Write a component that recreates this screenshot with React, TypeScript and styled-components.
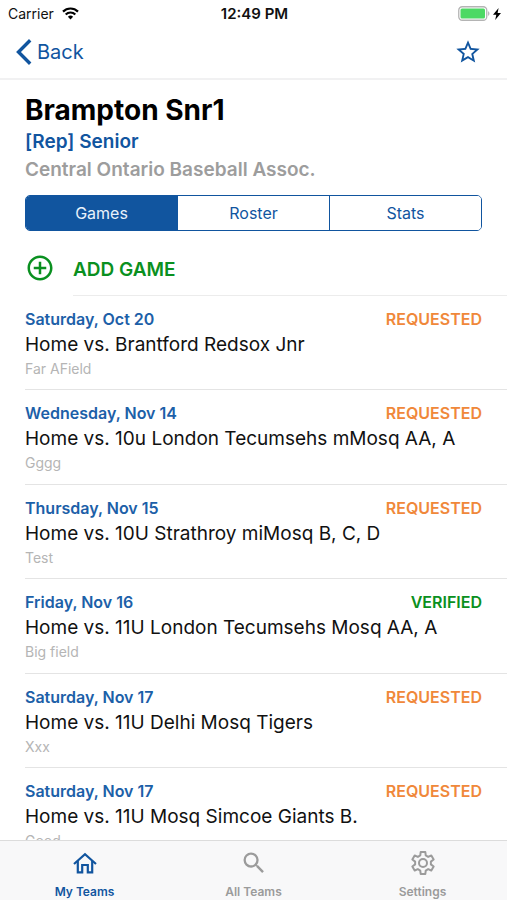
import React, { useState } from "react";
import styled, { createGlobalStyle } from "styled-components";
import { MdAddCircleOutline, MdSearch, MdStarBorder } from "react-icons/md";

const blue = "#11559f";
const green = "#0a9020";
const orange = "#f0883a";
const grey = "#9b9b9b";

const GlobalStyle = createGlobalStyle`
  *, *::before, *::after { box-sizing: border-box; }
  body { margin: 0; background: #fff; font-family: Inter, "Liberation Sans", sans-serif; color: #111; }
  h1, h2, p, ul { margin: 0; padding: 0; }
  ul { list-style: none; }
  button { font: inherit; background: none; border: 0; padding: 0; cursor: pointer; }
`;

const Screen = styled.div`
  display: flex;
  flex-direction: column;
  height: 100vh;
  overflow: hidden;
`;

const StatusBar = styled.div`
  display: grid;
  grid-template-columns: 1fr auto 1fr;
  align-items: center;
  flex: none;
  height: 27px;
  padding: 0 6px 0 8px;
  font-size: 14px;
  line-height: 20px;
`;

const Carrier = styled.span`
  display: flex;
  align-items: center;
  gap: 8px;
`;

const Clock = styled.time`
  font-size: 15px;
  font-weight: 600;
`;

const Power = styled.span`
  display: flex;
  align-items: center;
  justify-content: flex-end;
  gap: 3px;
`;

const NavBar = styled.nav`
  display: flex;
  align-items: center;
  justify-content: space-between;
  flex: none;
  height: 53px;
  padding: 0 25px 2px 16px;
  border-bottom: 2px solid #f1f1f2;
  color: ${blue};
`;

const BackLink = styled.a`
  display: flex;
  align-items: center;
  gap: 5px;
  color: ${blue};
  font-size: 20px;
  line-height: 28px;
  text-decoration: none;
`;

const IconButton = styled.button`
  display: flex;
  color: ${blue};
`;

const Content = styled.main`
  flex: 1;
  min-height: 0;
  overflow: hidden;
`;

const TeamHeader = styled.header`
  padding: 12px 25px 0;
`;

const TeamName = styled.h1`
  color: #000;
  font-size: 28px;
  line-height: 36px;
  font-weight: 700;
`;

const Division = styled.h2`
  color: ${blue};
  font-size: 19px;
  line-height: 28px;
  font-weight: 600;
`;

const Association = styled.p`
  color: #9d9d9d;
  font-size: 19px;
  line-height: 28px;
  font-weight: 600;
`;

const Segments = styled.div`
  display: flex;
  margin-top: 11px;
  height: 36px;
  border: 1px solid ${blue};
  border-radius: 5px;
  overflow: hidden;
`;

const Segment = styled.button<{ $active: boolean }>`
  flex: 1;
  font-size: 16px;
  line-height: 20px;
  color: ${(p) => (p.$active ? "#e8f1fb" : blue)};
  background: ${(p) => (p.$active ? blue : "#fff")};
  & + & { border-left: 1px solid ${blue}; }
`;

const AddGame = styled.button`
  display: flex;
  align-items: center;
  gap: 18px;
  width: 100%;
  height: 65px;
  padding: 9px 0 0 25px;
  color: ${green};
  svg { flex: none; }
`;

const AddLabel = styled.span`
  display: flex;
  align-items: center;
  flex: 1;
  height: 100%;
  padding-top: 4px;
  border-bottom: 1px solid #ececec;
  font-size: 19px;
  font-weight: 600;
`;

const GameRow = styled.li`
  height: 94px;
  margin-left: 25px;
  padding: 12px 25px 0 0;
  border-bottom: 1px solid #e4e4e4;
  &:nth-child(even) { height: 95px; }
`;

const GameTop = styled.div`
  display: flex;
  justify-content: space-between;
  font-size: 16px;
  line-height: 23px;
  font-weight: 600;
`;

const GameDate = styled.time`
  color: #1c60a8;
`;

const Status = styled.span<{ $verified: boolean }>`
  color: ${(p) => (p.$verified ? green : orange)};
`;

const Matchup = styled.p`
  font-size: 19px;
  line-height: 28px;
`;

const Field = styled.p`
  color: #b5b5b5;
  font-size: 14px;
  line-height: 20px;
`;

const TabBar = styled.nav`
  display: grid;
  grid-template-columns: repeat(3, 1fr);
  flex: none;
  height: 60px;
  border-top: 1px solid #dcdcdc;
  background: #f8f8f9;
`;

const Tab = styled.a<{ $active: boolean }>`
  display: flex;
  flex-direction: column;
  align-items: center;
  gap: 7px;
  padding-top: 8px;
  color: ${(p) => (p.$active ? blue : grey)};
  font-size: 12px;
  line-height: 16px;
  font-weight: 600;
  text-decoration: none;
`;

const games = [
  { date: "Saturday, Oct 20", status: "REQUESTED", title: "Home vs. Brantford Redsox Jnr", field: "Far AField" },
  { date: "Wednesday, Nov 14", status: "REQUESTED", title: "Home vs. 10u London Tecumsehs mMosq AA, A", field: "Gggg" },
  { date: "Thursday, Nov 15", status: "REQUESTED", title: "Home vs. 10U Strathroy miMosq B, C, D", field: "Test" },
  { date: "Friday, Nov 16", status: "VERIFIED", title: "Home vs. 11U London Tecumsehs Mosq AA, A", field: "Big field" },
  { date: "Saturday, Nov 17", status: "REQUESTED", title: "Home vs. 11U Delhi Mosq Tigers", field: "Xxx" },
  { date: "Saturday, Nov 17", status: "REQUESTED", title: "Home vs. 11U Mosq Simcoe Giants B.", field: "Good" },
];

const segments = ["Games", "Roster", "Stats"];

const gearPoints = Array.from({ length: 6 }, (_, i) => {
  const at = (radius: number, degrees: number) => {
    const a = ((i * 60 - 90 + degrees) * Math.PI) / 180;
    return `${(14 + radius * Math.cos(a)).toFixed(2)},${(14 + radius * Math.sin(a)).toFixed(2)}`;
  };
  return [at(8, -20), at(11.2, -12), at(11.2, 12), at(8, 20)].join(" ");
}).join(" ");

const GearIcon = ({ size = 28 }: { size?: number }) => (
  <svg width={size} height={size} viewBox="0 0 28 28" fill="none" stroke="currentColor" strokeWidth="2" strokeLinejoin="round" aria-hidden="true">
    <polygon points={gearPoints} />
    <circle cx="14" cy="14" r="4" />
  </svg>
);

const HomeIcon = ({ size = 28 }: { size?: number }) => (
  <svg width={size} height={size} viewBox="0 0 28 28" fill="none" stroke="currentColor" strokeWidth="2.2" aria-hidden="true">
    <path d="M3 15 14 5.2 25 15" />
    <path d="M6.8 12v11.4h4.4V16h5.6v7.4h4.4V12" />
  </svg>
);

const tabs = [
  { label: "My Teams", Icon: HomeIcon },
  { label: "All Teams", Icon: MdSearch },
  { label: "Settings", Icon: GearIcon },
];

const WifiIcon = () => (
  <svg width="17" height="13" viewBox="0 0 17 13" fill="none" stroke="#000" strokeWidth="2.2" aria-hidden="true">
    <path d="M1 4.6a10.6 10.6 0 0 1 15 0" />
    <path d="M3.7 7.5a6.8 6.8 0 0 1 9.6 0" />
    <path d="M8.5 12.5 5.9 9.8a3.7 3.7 0 0 1 5.2 0z" fill="#000" stroke="none" />
  </svg>
);

const BatteryIcon = () => (
  <svg width="32" height="15" viewBox="0 0 32 15" aria-hidden="true">
    <rect x="0.75" y="0.75" width="28" height="13.5" rx="3.5" fill="#fff" stroke="#b4b4b4" strokeWidth="1.3" />
    <rect x="2.5" y="2.5" width="24.5" height="10" rx="1.5" fill="#4cd964" />
    <path d="M30.2 5.2c1.6.6 1.6 4 0 4.6z" fill="#aaa" />
  </svg>
);

const BoltIcon = () => (
  <svg width="8" height="12" viewBox="0 0 8 12" aria-hidden="true">
    <path d="M5.6 0 0 6.8h3.3L2.2 12 8 4.9H4.6z" fill="#000" />
  </svg>
);

const ChevronIcon = () => (
  <svg width="16" height="26" viewBox="0 0 16 26" fill="none" stroke={blue} strokeWidth="3.4" aria-hidden="true">
    <path d="M14.2 1.3 2.5 13l11.7 11.7" />
  </svg>
);

export default function App() {
  const [segment, setSegment] = useState("Games");

  return (
    <Screen>
      <GlobalStyle />
      <StatusBar>
        <Carrier>Carrier <WifiIcon /></Carrier>
        <Clock>12:49 PM</Clock>
        <Power><BatteryIcon /><BoltIcon /></Power>
      </StatusBar>
      <NavBar>
        <BackLink href="#back"><ChevronIcon />Back</BackLink>
        <IconButton aria-label="Favourite"><MdStarBorder size={28} /></IconButton>
      </NavBar>
      <Content>
        <TeamHeader>
          <TeamName>Brampton Snr1</TeamName>
          <Division>[Rep] Senior</Division>
          <Association>Central Ontario Baseball Assoc.</Association>
          <Segments>
            {segments.map((name) => (
              <Segment key={name} $active={name === segment} aria-pressed={name === segment} onClick={() => setSegment(name)}>
                {name}
              </Segment>
            ))}
          </Segments>
        </TeamHeader>
        <AddGame>
          <MdAddCircleOutline size={30} />
          <AddLabel>ADD GAME</AddLabel>
        </AddGame>
        <ul>
          {games.map((game) => (
            <GameRow key={game.title}>
              <GameTop>
                <GameDate>{game.date}</GameDate>
                <Status $verified={game.status === "VERIFIED"}>{game.status}</Status>
              </GameTop>
              <Matchup>{game.title}</Matchup>
              <Field>{game.field}</Field>
            </GameRow>
          ))}
        </ul>
      </Content>
      <TabBar>
        {tabs.map(({ label, Icon }, i) => (
          <Tab key={label} href={`#tab-${i}`} $active={i === 0}>
            <Icon size={28} />
            {label}
          </Tab>
        ))}
      </TabBar>
    </Screen>
  );
}
